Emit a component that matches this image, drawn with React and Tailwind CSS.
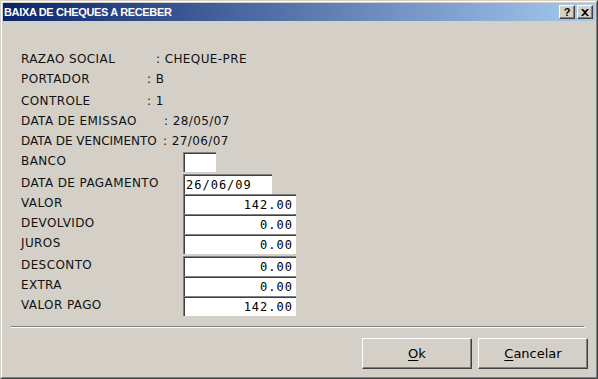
import React from "react";

const lbl = "font-['DejaVu_Sans',sans-serif] text-[12px] tracking-[0.4px] text-[#111] leading-[20px] whitespace-pre";
const mono = "font-['DejaVu_Sans_Mono',monospace] text-[12px] tracking-[1px] text-black";

function Field({ label, value, boxW, right, mt }) {
  return (
    <div className={`flex items-stretch h-[20px] ${mt}`}>
      <div className={`w-[162px] ${lbl} -mt-[1px]`}>{label}</div>
      <div
        className={`${boxW} h-[20px] bg-white border-t border-l border-[#808080] border-b-white border-r-white shadow-[inset_1px_1px_0_#404040] flex items-center ${right ? "justify-end pr-[3px]" : "pl-[2px]"} ${mono}`}
      >
        {value}
      </div>
    </div>
  );
}

function Info({ label, w, value, mt, tr }) {
  return (
    <div className={`flex h-[20px] ${mt} ${lbl}`}>
      <span className={`${w} ${tr}`}>{label}</span>
      <span>{": " + value}</span>
    </div>
  );
}

function CapBtn({ children }) {
  return (
    <div className="w-[16px] h-[14px] bg-[#d4d0c8] border-t border-l border-white border-b border-r border-b-[#404040] border-r-[#404040] shadow-[inset_-1px_-1px_0_#808080] flex items-center justify-center">
      {children}
    </div>
  );
}

function Button({ children }) {
  return (
    <div className="w-[110px] h-[31px] bg-[#d4d0c8] border-t border-l border-white border-b border-r border-b-[#404040] border-r-[#404040] shadow-[inset_-1px_-1px_0_#808080] flex items-center justify-center font-['DejaVu_Sans',sans-serif] text-[13px] text-black">
      {children}
    </div>
  );
}

export default function App() {
  return (
    <div className="w-[598px] h-[379px] bg-[#d4d0c8] border border-[#d4d0c8] border-b-[#404040] border-r-[#404040]">
      <div className="w-full h-full border border-white border-b-[#808080] border-r-[#808080] p-[1px] flex flex-col">
        {/* Title bar */}
        <div className="h-[18px] flex items-center bg-[linear-gradient(to_right,#0a246a,#a6caf0)] pl-[1px] pr-[2px]">
          <span className="font-['Liberation_Sans',Arial,sans-serif] font-bold text-[11px] tracking-[-0.35px] text-white flex-1">
            BAIXA DE CHEQUES A RECEBER
          </span>
          <CapBtn>
            <span className="font-['Liberation_Sans',Arial,sans-serif] font-bold text-[11px] leading-none text-black">?</span>
          </CapBtn>
          <div className="w-[2px]" />
          <CapBtn>
            <svg width="8" height="7" viewBox="0 0 8 7">
              <path d="M0 0h2l2 2 2-2h2L5 3.5 8 7H6L4 5 2 7H0l3-3.5z" fill="#000" />
            </svg>
          </CapBtn>
        </div>

        {/* Client area */}
        <div className="flex-1 flex flex-col">
          <div className="pl-[18px] pt-[28px] flex flex-col">
            <Info label="RAZAO SOCIAL" w="w-[135px]" value="CHEQUE-PRE" mt="" tr="" />
            <Info label="PORTADOR" w="w-[126px]" value="B" mt="" tr="" />
            <Info label="CONTROLE" w="w-[126px]" value="1" mt="mt-[2px]" tr="" />
            <Info label="DATA DE EMISSAO" w="w-[143px]" value="28/05/07" mt="" tr="" />
            <Info label="DATA DE VENCIMENTO" w="w-[142px]" value="27/06/07" mt="" tr="tracking-[0px]" />

            <Field label="BANCO" value="" boxW="w-[33px]" mt="mt-[1px]" />
            <Field label="DATA DE PAGAMENTO" value="26/06/09" boxW="w-[89px]" mt="mt-[2px]" />
            <Field label="VALOR" value="142.00" boxW="w-[113px]" right mt="" />
            <Field label="DEVOLVIDO" value="0.00" boxW="w-[113px]" right mt="" />
            <Field label="JUROS" value="0.00" boxW="w-[113px]" right mt="" />
            <Field label="DESCONTO" value="0.00" boxW="w-[113px]" right mt="mt-[2px]" />
            <Field label="EXTRA" value="0.00" boxW="w-[113px]" right mt="" />
            <Field label="VALOR PAGO" value="142.00" boxW="w-[113px]" right mt="" />
          </div>

          {/* Separator */}
          <div className="mt-[10px] ml-[8px] mr-[10px] h-[2px] border-t border-[#808080] border-b border-b-white border-r border-r-white" />

          {/* Buttons */}
          <div className="mt-[10px] flex justify-end gap-[6px] pr-[7px]">
            <Button>
              <span><span className="underline underline-offset-2">O</span>k</span>
            </Button>
            <Button>
              <span><span className="underline underline-offset-2">C</span>ancelar</span>
            </Button>
          </div>
        </div>
      </div>
    </div>
  );
}
